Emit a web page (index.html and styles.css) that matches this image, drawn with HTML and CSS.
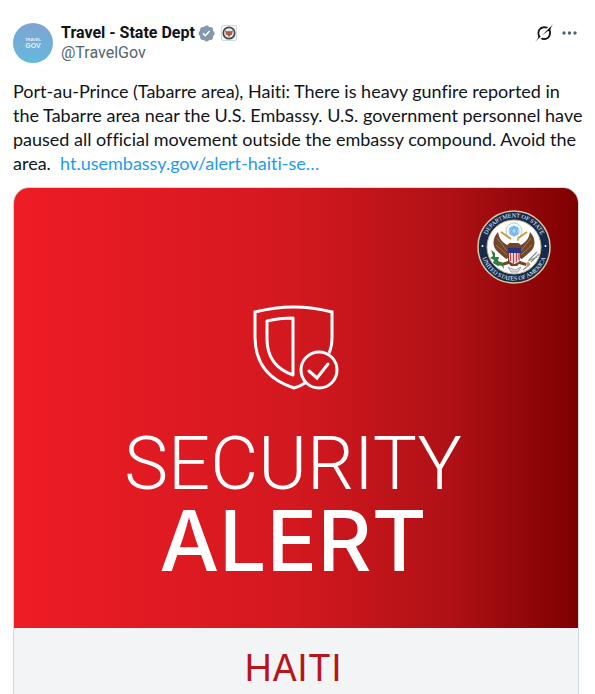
FILE: index.html
```html
<!DOCTYPE html>
<html lang="en">
<head>
  <meta charset="UTF-8">
  <meta name="viewport" content="width=device-width, initial-scale=1.0">
  <title>Travel - State Dept</title>
  <link rel="stylesheet" href="styles.css">
</head>
<body>
  <article class="post">
    <header class="post-header">
      <a class="avatar" href="#" aria-label="Travel - State Dept profile">
        <span class="avatar-top">TRAVEL</span>
        <span class="avatar-bottom">GOV</span>
      </a>
      <div class="author">
        <div class="name-row">
          <a class="name" href="#">Travel - State Dept</a>
          <svg class="verified" viewBox="0 0 22 22" aria-hidden="true">
            <path fill="#829aab" d="M20.4 11c0-.65-.2-1.27-.54-1.8-.34-.54-.82-.97-1.4-1.24.22-.6.27-1.26.14-1.9-.13-.63-.44-1.21-.88-1.68-.47-.45-1.05-.75-1.69-.88-.63-.13-1.29-.08-1.9.14-.26-.58-.69-1.07-1.23-1.41S11.75 1.7 11.1 1.7c-.65 0-1.27.18-1.81.53s-.96.83-1.23 1.41c-.6-.22-1.26-.27-1.9-.14-.64.13-1.22.43-1.69.88-.45.47-.75 1.05-.88 1.68-.13.64-.07 1.3.15 1.9-.59.27-1.08.7-1.42 1.24-.35.53-.54 1.16-.54 1.8 0 .65.19 1.27.54 1.81.34.54.83.97 1.42 1.24-.22.6-.28 1.26-.15 1.9.13.63.43 1.21.88 1.68.47.45 1.05.75 1.69.88.64.14 1.3.09 1.9-.13.27.58.69 1.07 1.23 1.41.54.35 1.16.53 1.81.53.65 0 1.28-.18 1.81-.53.54-.34.97-.83 1.23-1.41.61.24 1.27.29 1.91.15.64-.13 1.22-.44 1.68-.9.46-.46.77-1.05.9-1.69.14-.63.09-1.29-.15-1.9.58-.26 1.07-.69 1.41-1.23.35-.54.53-1.16.53-1.81z"/>
            <path fill="#fff" d="M9.7 14.9l-3.4-3.4 1.3-1.3 2.1 2.1 4.3-4.8 1.3 1.3z"/>
          </svg>
          <svg class="affiliate" viewBox="0 0 16 16" aria-hidden="true">
            <rect x=".5" y=".5" width="15" height="15" rx="1.5" fill="#f7f9f9" stroke="#cfd9de"/>
            <circle cx="8" cy="8" r="5.7" fill="#f3e9df" stroke="#3d475b" stroke-width="1.7"/>
            <path fill="#94653e" d="M4 5.500l3 1 1-1 1 1 3-1-1 4-2 1-1 2-1-2-2-1z"/>
            <path fill="#b9525a" d="M7 7.500h2v2.300l-1 1-1-1z"/>
          </svg>
        </div>
        <a class="handle" href="#">@TravelGov</a>
      </div>
      <div class="actions">
        <button type="button" aria-label="Explain this post">
          <svg viewBox="0 0 33 32">
            <path fill="#0f1419" d="M12.745 20.54l10.97-8.19c.539-.4 1.307-.244 1.564.38 1.349 3.288.746 7.241-1.938 9.955-2.683 2.714-6.417 3.31-9.83 1.954l-3.728 1.745c5.347 3.697 11.84 2.782 15.898-1.324 3.219-3.255 4.216-7.692 3.284-11.693l.008.009c-1.351-5.878.332-8.227 3.782-13.031L33 0l-4.54 4.59v-.014L12.743 20.544m-2.263 1.987c-3.837-3.707-3.175-9.446.1-12.755 2.42-2.449 6.388-3.448 9.852-1.979l3.72-1.737c-.67-.49-1.53-1.017-2.515-1.387-4.455-1.854-9.789-.931-13.41 2.728-3.483 3.523-4.579 8.94-2.697 13.561 1.405 3.454-.899 5.898-3.22 8.364C1.49 30.2.666 31.074 0 32l10.478-9.466"/>
          </svg>
        </button>
        <button type="button" aria-label="More">
          <svg viewBox="0 0 20 20" fill="#536471">
            <circle cx="5" cy="10" r="1.700"/>
            <circle cx="10.500" cy="10" r="1.700"/>
            <circle cx="16" cy="10" r="1.700"/>
          </svg>
        </button>
      </div>
    </header>

    <p class="post-text">Port-au-Prince (Tabarre area), Haiti: There is heavy gunfire reported in<br>
      the Tabarre area near the U.S. Embassy. U.S. government personnel have<br>
      paused all official movement outside the embassy compound. Avoid the<br>
      area.&nbsp; <a href="#">ht.usembassy.gov/alert-haiti-se…</a></p>

    <section class="card">
      <div class="banner">
        <svg class="seal" viewBox="0 0 74 74" aria-hidden="true">
          <defs>
            <path id="arc-top" d="M7.500 37a29.500 29.500 0 0 1 59 0"/>
            <path id="arc-bottom" d="M3.500 37a33.500 33.500 0 0 0 67 0"/>
          </defs>
          <circle cx="37" cy="37" r="36" fill="#152b4e" stroke="#dcc79c" stroke-width="1.500"/>
          <circle cx="37" cy="37" r="27" fill="#fff" stroke="#c9b284"/>
          <g class="seal-text">
            <text><textPath href="#arc-top" startOffset="50%">DEPARTMENT OF STATE</textPath></text>
            <text><textPath href="#arc-bottom" startOffset="50%">UNITED STATES OF AMERICA</textPath></text>
          </g>
          <circle cx="5.500" cy="36" r="1" fill="#fff"/>
          <circle cx="68.500" cy="36" r="1" fill="#fff"/>
          <circle cx="37" cy="21" r="8" fill="#f4fafd" stroke="#b9cdd8"/>
          <circle cx="37" cy="21" r="5.500" fill="#a5d5f2"/>
          <path d="M37 16l4 8h-8zM37 26l-4-8h8z" fill="none" stroke="#6baedb"/>
          <path d="M24 22l10 7M50 22l-10 7" stroke="#c99c3d" stroke-width="2"/>
          <path fill="#70452a" d="M21 22c-6 6-6 15 0 20l8 7 2-1v3l-6 2v3l7-2 2 2h6l2-2 7 2v-3l-6-2v-3l2 1 8-7c6-5 6-14 0-20-1 6-3 9-9 13l-4-3h-6l-4 3c-6-4-8-7-9-13z"/>
          <path d="M20 28l10 13M19 35l11 10M54 28l-10 13M55 35l-11 10" fill="none" stroke="#a77848"/>
          <path d="M33 33l2-5 3-1 4 2-1 4z" fill="#fff"/>
          <path d="M40 28l3 2-3 1z" fill="#e1ad43"/>
          <path d="M32 39h11v10c0 3-3 4-5.500 5-2.500-1-5.500-2-5.500-5z" fill="#eee"/>
          <path d="M33.500 40v11M36.500 40v13M39.500 40v12M42 40v10" stroke="#c83e50" stroke-width="1.400"/>
          <path d="M31 38h13v5H31z" fill="#27347d"/>
          <path d="M31 57l3 5h7l3-5-6 3z" fill="#ddd" stroke="#aaa"/>
          <circle cx="24" cy="54" r="2" fill="#c99c3d"/>
          <circle cx="51" cy="54" r="2" fill="#c99c3d"/>
          <path d="M14 40l4 3 0 4 4 0-1 4 5 2 1 6-3-4-3 1-5-3 1-3-4-2 3-2z" fill="#347a43"/>
          <path d="M52 50l8-8M54 52l8-8M51 51l9-4M46 60l7-6" stroke="#8d9190" stroke-width="1.200"/>
        </svg>
        <svg class="shield" viewBox="-6 0 94 86" fill="none" stroke="#fff" stroke-width="3" aria-hidden="true">
          <path d="M77 49c3-6 3-10 3-16V8C54 1 30 1 3 8v25c0 27 14 43 39 51 4-1 8-3 11-5"/>
          <path d="M41 14c-9 0-18 1-26 3v18c0 18 9 30 26 36z" stroke-linejoin="round"/>
          <circle cx="67" cy="66" r="18"/>
          <path d="M57 67l8 7 11-14" stroke-linecap="round"/>
        </svg>
        <h1 class="title">
          <span class="title-light">SECURITY</span>
          <span class="title-bold">ALERT</span>
        </h1>
      </div>
      <p class="country">HAITI</p>
    </section>
  </article>
</body>
</html>
```
FILE: styles.css
```css
* {
  box-sizing: border-box;
}
body {
  margin: 0;
  background-color: #fff;
  color: #0f1419;
  font-family: Roboto, "Noto Sans", sans-serif;
  overflow: hidden;
}
a {
  color: inherit;
  text-decoration: none;
}
svg {
  display: block;
}
.post {
  padding: 23px 16px 0 13px;
}
.post-header {
  display: flex;
  gap: 8px;
}
.avatar {
  display: flex;
  flex-direction: column;
  align-items: center;
  justify-content: center;
  width: 40px;
  height: 40px;
  border-radius: 50%;
  background: linear-gradient(#7fa3d1, #64b9df);
  color: #e4f1fa;
  font-family: "Liberation Sans", sans-serif;
  font-weight: bold;
}
.avatar-top {
  font-size: 4px;
  line-height: 4px;
}
.avatar-bottom {
  font-size: 7px;
  line-height: 7px;
}
.author {
  flex: 1;
  font-size: 16px;
  line-height: 20px;
}
.name-row {
  display: flex;
  align-items: center;
  gap: 2px;
}
.name {
  font-weight: 700;
}
.verified {
  width: 19px;
  height: 19px;
}
.affiliate {
  width: 16px;
  height: 16px;
  margin-left: 3px;
}
.handle {
  color: #536471;
}
.actions {
  display: flex;
  align-items: flex-start;
  gap: 5px;
}
.actions button {
  padding: 0;
  border: none;
  background: none;
  cursor: pointer;
}
.actions svg {
  width: 20px;
  height: 20px;
}
.actions button:first-child svg {
  padding: 1px;
}
.post-text {
  margin: 16px -10px 12px 0;
  font-family: Lato, sans-serif;
  font-size: 18px;
  font-variant-ligatures: none;
  line-height: 24px;
}
.post-text a {
  color: #1d9bf0;
}
.card {
  border: 1px solid #cfd9de;
  border-bottom: none;
  border-radius: 16px 16px 0 0;
  background-color: #f2f4f6;
  overflow: hidden;
}
.banner {
  position: relative;
  padding: 116px 6px 48px 0;
  background: linear-gradient(to right, #ee1c25, #d3181f 50%, #b01116 77%, #7e0000);
  color: #fff;
}
.seal {
  position: absolute;
  top: 22px;
  right: 27px;
  width: 74px;
  height: 74px;
}
.seal-text {
  fill: #fff;
  font-family: "Liberation Serif", serif;
  font-size: 6px;
  text-anchor: middle;
}
.shield {
  width: 94px;
  height: 86px;
  margin: 0 auto;
}
.title {
  display: flex;
  flex-direction: column;
  align-items: center;
  margin: 35px 0 0;
}
.title-light {
  font-size: 74px;
  font-weight: 300;
  line-height: 77px;
}
.title-bold {
  font-family: Inter, sans-serif;
  font-size: 84px;
  font-weight: 500;
  line-height: 78px;
}
.country {
  margin: 0;
  padding: 20px 6px 8px 0;
  color: #b5161c;
  font-family: Inter, sans-serif;
  font-size: 37px;
  line-height: 40px;
  text-align: center;
}
```
